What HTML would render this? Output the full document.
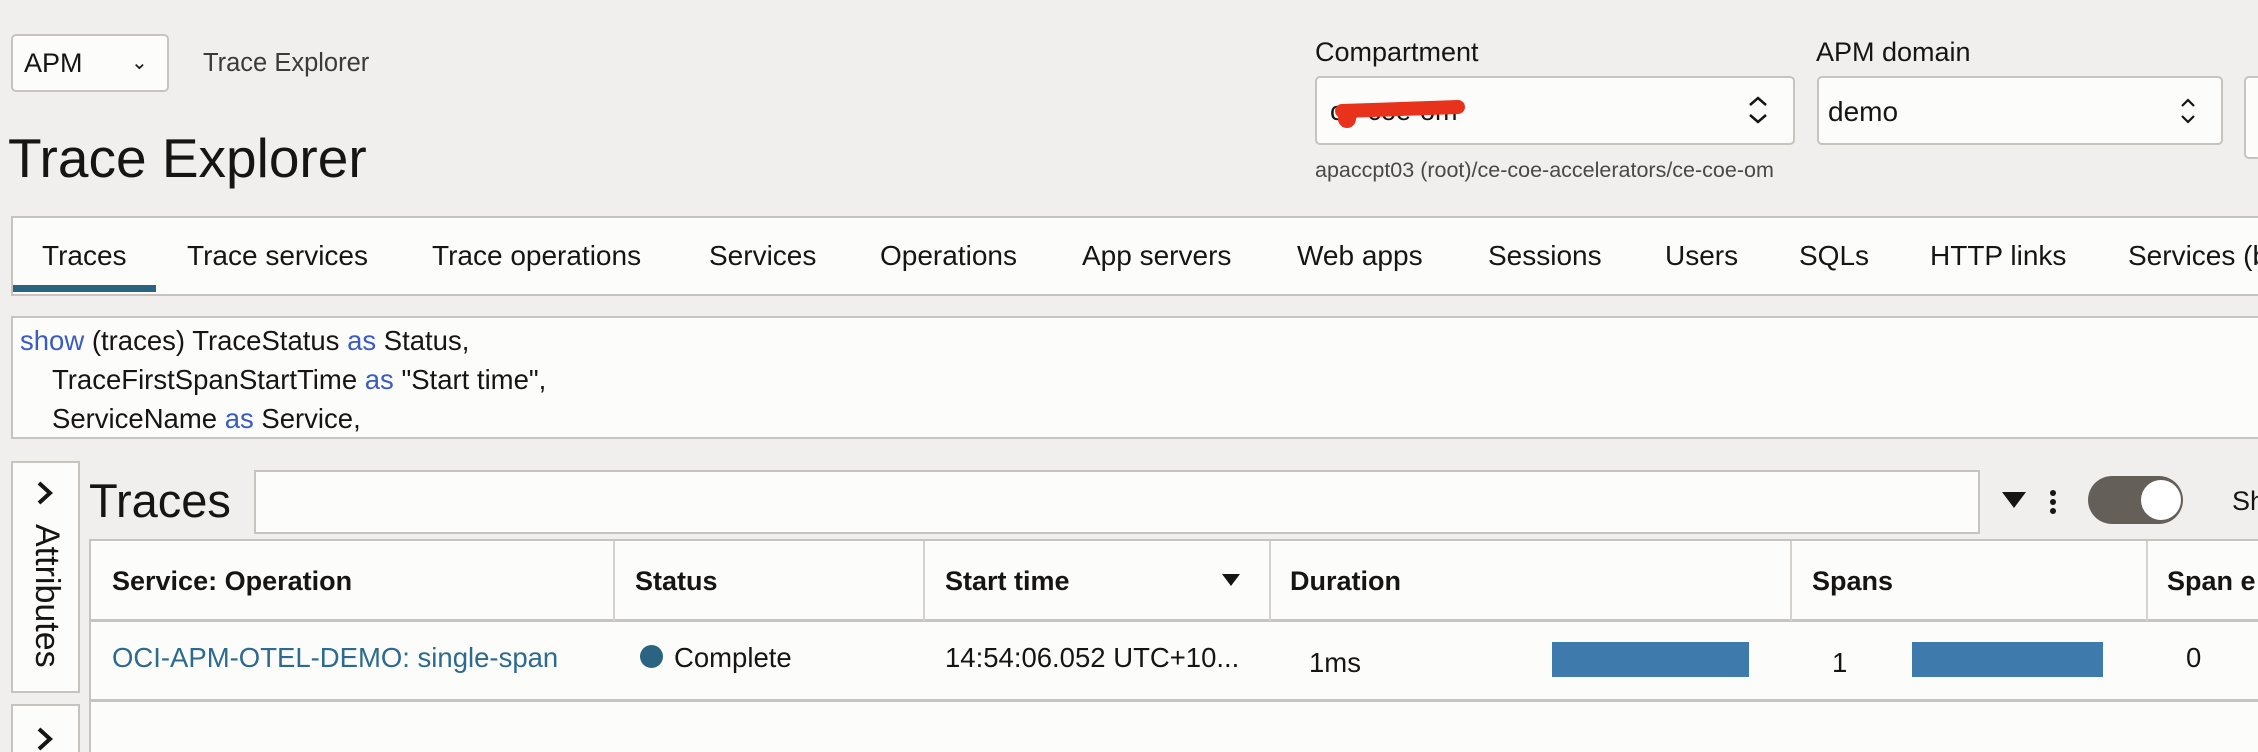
<!DOCTYPE html>
<html><head><meta charset="utf-8"><style>
*{box-sizing:border-box;margin:0;padding:0}
html,body{width:2258px;height:752px;overflow:hidden}
body{background:#f0efed;font-family:"Liberation Sans",Arial,sans-serif;color:#161513;position:relative}
.a{position:absolute;white-space:nowrap}
.box{position:absolute;background:#fcfcfb;border:2px solid #c7c3be}
.tab{position:absolute;top:240px;font-size:28px;color:#161513;white-space:nowrap}
.q{position:absolute;left:20px;font-size:27.5px;white-space:nowrap}
.kw{color:#3b5bc4}
.th{position:absolute;top:566px;font-size:27px;font-weight:bold;white-space:nowrap}
.vl{position:absolute;top:541px;height:80px;width:2px;background:#d5d2cd}
.td{position:absolute;font-size:27.5px;white-space:nowrap}
</style></head><body>
<div class="box" style="left:11px;top:34px;width:158px;height:58px;border-radius:5px"></div>
<div class="a" style="left:24px;top:48px;font-size:27px">APM</div>
<div class="a" style="left:131px;top:50px;font-size:20px">&#8964;</div>
<div class="a" style="left:203px;top:49px;font-size:25.5px;color:#3c3a37">Trace Explorer</div>
<div class="a" style="left:8px;top:126px;font-size:55px">Trace Explorer</div>

<div class="a" style="left:1315px;top:37px;font-size:27px">Compartment</div>
<div class="box" style="left:1315px;top:76px;width:480px;height:69px;border-radius:5px"></div>
<div class="a" style="left:1330px;top:96px;font-size:27px">ce-coe-om</div>
<div class="a" style="left:1335px;top:102px;width:130px;height:14px;background:#e8321c;border-radius:7px;transform:rotate(-2deg)"></div>
<div class="a" style="left:1338px;top:110px;width:18px;height:18px;background:#e8321c;border-radius:50%"></div>
<svg class="a" style="left:1746px;top:95px" width="24" height="30"><path d="M4 10 L12 3 L20 10 M4 20 L12 27 L20 20" fill="none" stroke="#161513" stroke-width="2.5"/></svg>
<div class="a" style="left:1315px;top:158px;font-size:21.5px;color:#4a4845">apaccpt03 (root)/ce-coe-accelerators/ce-coe-om</div>

<div class="a" style="left:1816px;top:37px;font-size:27px">APM domain</div>
<div class="box" style="left:1817px;top:76px;width:406px;height:69px;border-radius:5px"></div>
<div class="a" style="left:1828px;top:96px;font-size:28px">demo</div>
<svg class="a" style="left:2178px;top:97px" width="20" height="28"><path d="M4 9 L10 3 L16 9 M4 19 L10 25 L16 19" fill="none" stroke="#161513" stroke-width="2.2"/></svg>
<div class="box" style="left:2244px;top:76px;width:40px;height:83px;border-radius:5px"></div>

<div class="box" style="left:11px;top:216px;width:2260px;height:80px"></div>
<div class="a" style="left:13px;top:285px;width:143px;height:7px;background:#2b6382"></div>
<div class="tab" style="left:42px">Traces</div>
<div class="tab" style="left:187px">Trace services</div>
<div class="tab" style="left:432px">Trace operations</div>
<div class="tab" style="left:709px">Services</div>
<div class="tab" style="left:880px">Operations</div>
<div class="tab" style="left:1082px">App servers</div>
<div class="tab" style="left:1297px">Web apps</div>
<div class="tab" style="left:1488px">Sessions</div>
<div class="tab" style="left:1665px">Users</div>
<div class="tab" style="left:1799px">SQLs</div>
<div class="tab" style="left:1930px">HTTP links</div>
<div class="tab" style="left:2128px">Services (b</div>

<div class="box" style="left:11px;top:316px;width:2260px;height:123px"></div>
<div class="q" style="top:325px"><span class="kw">show</span> (traces) TraceStatus <span class="kw">as</span> Status,</div>
<div class="q" style="top:364px;left:52px">TraceFirstSpanStartTime <span class="kw">as</span> "Start time",</div>
<div class="q" style="top:403px;left:52px">ServiceName <span class="kw">as</span> Service,</div>

<div class="box" style="left:11px;top:461px;width:69px;height:232px"></div>
<svg class="a" style="left:34px;top:480px" width="22" height="26"><path d="M5 3 L16 13 L5 23" fill="none" stroke="#161513" stroke-width="4"/></svg>
<div class="a" style="left:48px;top:524px;font-size:34px;transform-origin:0 0;transform:rotate(90deg) translate(0,-18px)">Attributes</div>
<div class="box" style="left:11px;top:704px;width:69px;height:60px"></div>
<svg class="a" style="left:34px;top:726px" width="22" height="26"><path d="M5 3 L16 13 L5 23" fill="none" stroke="#161513" stroke-width="4"/></svg>

<div class="a" style="left:89px;top:473px;font-size:47px">Traces</div>
<div class="box" style="left:254px;top:470px;width:1726px;height:64px"></div>
<svg class="a" style="left:2001px;top:490px" width="26" height="20"><path d="M1 2 L25 2 L13 18Z" fill="#161513"/></svg>
<svg class="a" style="left:2049px;top:488px" width="8" height="30"><circle cx="4" cy="5" r="3" fill="#161513"/><circle cx="4" cy="14" r="3" fill="#161513"/><circle cx="4" cy="23" r="3" fill="#161513"/></svg>
<div class="a" style="left:2088px;top:476px;width:95px;height:48px;border-radius:24px;background:#655f5a"></div>
<div class="a" style="left:2141px;top:480px;width:40px;height:40px;border-radius:50%;background:#fff"></div>
<div class="a" style="left:2232px;top:486px;font-size:27px">Sh</div>

<div class="box" style="left:89px;top:539px;width:2200px;height:230px"></div>
<div class="a" style="left:91px;top:619px;width:2200px;height:3px;background:#c7c3be"></div>
<div class="a" style="left:91px;top:699px;width:2200px;height:3px;background:#c7c3be"></div>
<div class="vl" style="left:613px"></div><div class="vl" style="left:923px"></div><div class="vl" style="left:1269px"></div><div class="vl" style="left:1790px"></div><div class="vl" style="left:2146px"></div>
<div class="th" style="left:112px">Service: Operation</div>
<div class="th" style="left:635px">Status</div>
<div class="th" style="left:945px">Start time</div>
<svg class="a" style="left:1221px;top:572px" width="20" height="16"><path d="M1 2 L19 2 L10 14Z" fill="#161513"/></svg>
<div class="th" style="left:1290px">Duration</div>
<div class="th" style="left:1812px">Spans</div>
<div class="th" style="left:2167px">Span e</div>

<div class="td" style="left:112px;top:642px;color:#2c6b8f">OCI-APM-OTEL-DEMO: single-span</div>
<div class="a" style="left:640px;top:645px;width:23px;height:23px;border-radius:50%;background:#2b6382"></div>
<div class="td" style="left:674px;top:642px">Complete</div>
<div class="td" style="left:945px;top:642px">14:54:06.052 UTC+10...</div>
<div class="td" style="left:1309px;top:647px">1ms</div>
<div class="a" style="left:1552px;top:642px;width:197px;height:35px;background:#3f7aac"></div>
<div class="td" style="left:1832px;top:647px">1</div>
<div class="a" style="left:1912px;top:642px;width:191px;height:35px;background:#3f7aac"></div>
<div class="td" style="left:2186px;top:642px">0</div>
</body></html>
